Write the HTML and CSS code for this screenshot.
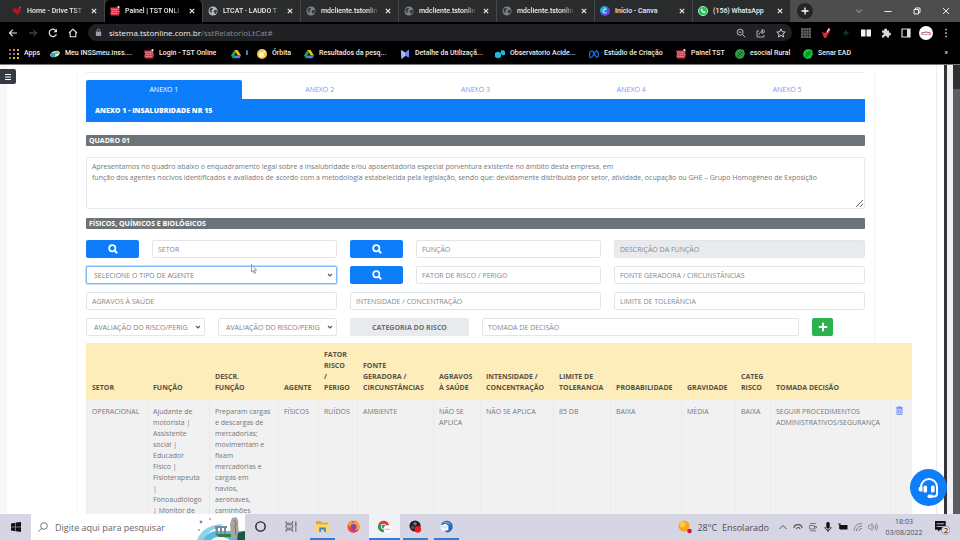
FILE: index.html
```
<!DOCTYPE html>
<html lang="pt-BR">
<head>
<meta charset="UTF-8">
<meta name="viewport" content="width=device-width, initial-scale=1.0">
<title>Painel | TST ONLINE</title>
<link rel="stylesheet" href="styles.css">
</head>
<body>

  <!-- shared icons -->
  <svg class="sprite" aria-hidden="true">
    <symbol id="globe" viewBox="0 0 10 10"><circle cx="5" cy="5" r="4.5" fill="#b9bbbe"/><path d="M1.5 3l2-1.3 1.6.8-.8 1.4-1.3.5.9 1.2-.5 1.6L1.7 5.6zM6 4.4l2.2-.9.9 1.7-1.2 2.2-1.3.6-.3-1.7-1-.7z" fill="#3b3d40"/></symbol>
    <symbol id="tst" viewBox="0 0 10 10"><path d="M0 1.5h6L8 0v1.5h2L9 4l1 1-1 4.5H1.2L0 7l1-2z" fill="#d9324a"/><path d="M1 3.4h8M1.5 5.4h7M1.5 7.4h6.5" stroke="#f3bcc4" stroke-width=".7" stroke-dasharray="1.6 .5"/><circle cx="8.6" cy="1" r=".9" fill="#fff"/></symbol>
    <symbol id="drive" viewBox="0 0 10 10"><path d="M3.4 1h3.2L10 6.6H6.8z" fill="#fbbc04"/><path d="M3.4 1L5 3.8 1.7 9.2 0 6.6z" fill="#1fa463"/><path d="M3.4 6.6H10L8.4 9.2H1.8z" fill="#4285f4"/></symbol>
    <symbol id="leaf" viewBox="0 0 10 10"><path d="M5 0l4 1 .8 4L8 9 4 10 .6 8 0 4 2 1z" fill="currentColor"/><path d="M1 9l7-7M3 3l4 4M2 5l3 3M5 2l3 3" stroke="#0b4d18" stroke-width=".7"/></symbol>
    <symbol id="close" viewBox="0 0 8 8"><path d="M1.8 1.8l4.4 4.4M6.2 1.8L1.8 6.2" stroke="#e8e8e8" stroke-width="1.2"/></symbol>
    <symbol id="search" viewBox="0 0 10 10"><circle cx="4.3" cy="4.3" r="3.1" fill="none" stroke="#fff" stroke-width="1.7"/><path d="M6.6 6.6l2.6 2.6" stroke="#fff" stroke-width="2"/></symbol>
    <symbol id="chevron" viewBox="0 0 6 6"><path d="M1 2l2 2 2-2" fill="none" stroke="#55595e" stroke-width="1.1"/></symbol>
  </svg>

  <header class="browser">
    <div class="tabs">
      <div class="tab">
        <svg class="icon" viewBox="0 0 10 10"><path d="M5 9L.6 4.6C0 2 3 1 5 3c2-2 4.600-.6 4.200 1.800z" fill="#b5121f"/><circle cx="7.800" cy="1.500" r="1" fill="#e33"/></svg>
        <span class="tab-title">Home - Drive TST</span>
        <button class="tab-close" aria-label="Fechar"><svg><use href="#close"/></svg></button>
      </div>
      <div class="tab active">
        <svg class="icon"><use href="#tst"/></svg>
        <span class="tab-title">Painel | TST ONLI</span>
        <button class="tab-close" aria-label="Fechar"><svg><use href="#close"/></svg></button>
      </div>
      <div class="tab">
        <svg class="icon"><use href="#globe"/></svg>
        <span class="tab-title">LTCAT - LAUDO T</span>
        <button class="tab-close" aria-label="Fechar"><svg><use href="#close"/></svg></button>
      </div>
      <div class="tab">
        <svg class="icon dim"><use href="#globe"/></svg>
        <span class="tab-title">mdcliente.tstonlin</span>
        <button class="tab-close" aria-label="Fechar"><svg><use href="#close"/></svg></button>
      </div>
      <div class="tab">
        <svg class="icon dim"><use href="#globe"/></svg>
        <span class="tab-title">mdcliente.tstonlin</span>
        <button class="tab-close" aria-label="Fechar"><svg><use href="#close"/></svg></button>
      </div>
      <div class="tab">
        <svg class="icon dim"><use href="#globe"/></svg>
        <span class="tab-title">mdcliente.tstonlin</span>
        <button class="tab-close" aria-label="Fechar"><svg><use href="#close"/></svg></button>
      </div>
      <div class="tab">
        <svg class="icon" viewBox="0 0 10 10"><circle cx="5" cy="5" r="5" fill="#5a4be0"/><path d="M0 5a5 5 0 0 1 5-5l2 2-4 6z" fill="#19b9d0"/><path d="M6.800 3.600C6 2.200 3.500 3 3.400 5.500c0 2 2.400 2 3.300.6" fill="none" stroke="#fff"/></svg>
        <span class="tab-title">Início - Canva</span>
        <button class="tab-close" aria-label="Fechar"><svg><use href="#close"/></svg></button>
      </div>
      <div class="tab">
        <svg class="icon" viewBox="0 0 10 10"><circle cx="5" cy="5" r="4.600" fill="#25c254" stroke="#d9f7e0" stroke-width=".8"/><path d="M3 3c-.4 2 2 4.500 4 4l.3-1.300-1.200-.6-.6.500L4.200 4.400l.4-.6L4 2.700z" fill="#fff"/></svg>
        <span class="tab-title">(156) WhatsApp</span>
        <button class="tab-close" aria-label="Fechar"><svg><use href="#close"/></svg></button>
      </div>
      <div class="window-bar">
        <button class="new-tab" aria-label="Nova guia"><svg viewBox="0 0 10 10"><path d="M5 1.500v7M1.500 5h7" stroke="#fff" stroke-width="1.300"/></svg></button>
        <div class="window-buttons">
          <button aria-label="Pesquisar guias"><svg viewBox="0 0 10 10"><path d="M2 3.500l3 3 3-3" fill="none" stroke="#ccc" stroke-width=".8"/></svg></button>
          <button aria-label="Minimizar"><svg viewBox="0 0 10 10"><path d="M1.500 5.500h7" stroke="#eee"/></svg></button>
          <button aria-label="Restaurar"><svg viewBox="0 0 10 10"><path d="M2 3.500h4.500V8H2zM3.500 3.500V2H8v4.500H6.500" fill="none" stroke="#eee"/></svg></button>
          <button aria-label="Fechar janela"><svg viewBox="0 0 10 10"><path d="M2 2l6 6M8 2L2 8" stroke="#eee"/></svg></button>
        </div>
      </div>
    </div>

    <div class="toolbar">
      <nav class="nav-buttons">
        <button aria-label="Voltar"><svg viewBox="0 0 10 10"><path d="M9 5H1.500M4.800 1.700L1.500 5l3.300 3.300" fill="none" stroke="#e8e8e8" stroke-width="1.100"/></svg></button>
        <button aria-label="Avançar"><svg viewBox="0 0 10 10"><path d="M1 5h7.500M5.200 1.700L8.500 5 5.200 8.300" fill="none" stroke="#606060"/></svg></button>
        <button aria-label="Recarregar"><svg viewBox="0 0 10 10"><path d="M8.400 6.200A3.700 3.700 0 1 1 7.800 2.500" fill="none" stroke="#e8e8e8" stroke-width="1.200"/><path d="M9 .8v3.400H5.600z" fill="#e8e8e8"/></svg></button>
        <button aria-label="Página inicial"><svg viewBox="0 0 10 10"><path d="M1 5l4-3.800L9 5M2.200 4.500v4.300h5.600V4.500" fill="none" stroke="#e8e8e8" stroke-width="1.100"/></svg></button>
      </nav>
      <div class="address">
        <svg class="lock" viewBox="0 0 8 10"><path d="M1 4h6v5H1z" fill="#9aa0a6"/><path d="M2.400 4V2.800a1.600 1.600 0 0 1 3.200 0V4" fill="none" stroke="#9aa0a6"/></svg>
        <span class="url"><b>sistema.tstonline.com.br</b>/sstRelatorioLtCat#</span>
        <div class="address-icons">
          <svg viewBox="0 0 10 10"><circle cx="4.200" cy="4.200" r="3" fill="none" stroke="#bbb"/><path d="M2.800 4.200h2.800M6.500 6.500L9.300 9.300" stroke="#bbb"/></svg>
          <svg viewBox="0 0 10 10"><path d="M3 3H1v6h7V7M3 7c.2-2.500 1.800-3.500 4-3.500M6 1.300l3 2.200L6 5.700z" fill="none" stroke="#bbb" stroke-width=".9"/></svg>
          <svg viewBox="0 0 10 10"><path d="M5 .9l1.200 2.800 3 .3-2.300 2 .7 3L5 7.400 2.400 9l.7-3L.8 4l3-.3z" fill="none" stroke="#ddd" stroke-width=".9"/></svg>
        </div>
      </div>
      <div class="extensions">
        <svg viewBox="0 0 10 10"><path d="M0 0h10v10H0z" fill="#626262"/><path d="M0 2.500h10M0 5h10M0 7.500h10M2.500 0v10M5 0v10M7.500 0v10" stroke="#252525" stroke-width=".6"/></svg>
        <svg viewBox="0 0 10 10"><path d="M1 4l3 1 4-5 1.500 2L5 10H3z" fill="#d7283b"/><path d="M6 3l2-3 1 1-3 4z" fill="#eee"/></svg>
        <svg viewBox="0 0 10 10"><path d="M5 2.500v5M2.500 5h5" stroke="#06352d" stroke-width="2"/></svg>
        <svg viewBox="0 0 10 10"><path d="M0 1.500h4.500v7H0zM5.500 1.500H10v7H5.500z" fill="#f4f4f4"/></svg>
        <svg viewBox="0 0 10 10"><path d="M1 2.500h2.300a1.400 1.400 0 1 1 2.600 0H8v2.200a1.400 1.400 0 1 1 0 2.600V9.500H5.800a1.300 1.300 0 1 0-2.500 0H1V7.200a1.300 1.300 0 1 0 0-2.500z" fill="#d8d8d8"/></svg>
        <svg viewBox="0 0 10 10"><path d="M1 1h8v8H1z" fill="none" stroke="#ddd" stroke-width="1.200"/><path d="M6 1h3v8H6z" fill="#ddd"/></svg>
        <svg class="avatar" viewBox="0 0 14 14"><circle cx="7" cy="7" r="7" fill="#fff"/><path d="M2 7.200q5-2.500 10 0" fill="none" stroke="#c7425a"/><path d="M2 8.500h10" stroke="#777" stroke-width=".6"/></svg>
        <svg viewBox="0 0 10 10"><path d="M4.300.8h1.500v1.500H4.300zM4.300 4.300h1.500v1.500H4.300zM4.300 7.800h1.500v1.500H4.300z" fill="#ddd"/></svg>
      </div>
    </div>

    <nav class="bookmarks">
      <a href="#"><svg class="icon" viewBox="0 0 10 10"><path d="M0 0h2v2H0zM0 4h2v2H0z" fill="#ea4335"/><path d="M4 0h2v2H4zM8 0h2v2H8z" fill="#f28b5b"/><path d="M4 4h2v2H4z" fill="#4285f4"/><path d="M8 4h2v2H8zM4 8h2v2H4zM8 8h2v2H8z" fill="#fbbc04"/><path d="M0 8h2v2H0z" fill="#34a853"/></svg>Apps</a>
      <a href="#"><svg class="icon" viewBox="0 0 10 10"><ellipse cx="5" cy="5" rx="5" ry="3" transform="rotate(-20 5 5)" fill="#d8ece6"/><circle cx="3" cy="6" r="2.200" fill="#25a2c9"/><path d="M4 3l4-1 1 2-4 2z" fill="#7fc36b"/></svg>Meu INSSmeu.inss....</a>
      <a href="#"><svg class="icon"><use href="#tst"/></svg>Login - TST Online</a>
      <a href="#"><svg class="icon"><use href="#drive"/></svg>i</a>
      <a href="#"><svg class="icon" viewBox="0 0 10 10"><circle cx="5" cy="5" r="5" fill="#f7c948"/><circle cx="4.500" cy="5.500" r="2.600" fill="#fff3c9"/><circle cx="7.500" cy="2.500" r="1" fill="#fff"/></svg>Órbita</a>
      <a href="#"><svg class="icon"><use href="#drive"/></svg>Resultados da pesq...</a>
      <a href="#"><svg class="icon" viewBox="0 0 10 10"><path d="M1 1l4 2.500L9 .5v8L5.500 7 1.500 10z" fill="#6c8be8"/><path d="M1 1l4 2.500v3L1.500 10z" fill="#a9bcf5"/></svg>Detalhe da Utilizaçã...</a>
      <a href="#"><svg class="icon" viewBox="0 0 10 10"><path d="M0 4l3-1.500 3 1.500v4L3 9.500 0 8zM6 1.500L8 1l2 1.500v3L8 6.500 6 5z" fill="#22b8d6"/></svg>Observatorio Acide...</a>
      <a href="#"><svg class="icon" viewBox="0 0 10 10"><path d="M1 8.300C-.3 5 1.300 1.700 3 1.900 5 2.200 6 8.300 8 8.300c2.400 0 1.500-6.300-.5-6.300C5.500 2 4 8.300 2 8.600z" fill="none" stroke="#1771e6" stroke-width="1.300"/></svg>Estúdio de Criação</a>
      <a href="#"><svg class="icon"><use href="#tst"/></svg>Painel TST</a>
      <a href="#"><svg class="icon green"><use href="#leaf"/></svg>esocial Rural</a>
      <a href="#"><svg class="icon bright"><use href="#leaf"/></svg>Senar EAD</a>
      <a href="#" class="more">»</a>
    </nav>
  </header>

  <div class="page">
    <aside class="sidebar">
      <button class="menu-toggle" aria-label="Menu"><svg viewBox="0 0 8 8"><path d="M1 1.500h6M1 4h6M1 6.500h6" stroke="#fff" stroke-width="1.100"/></svg></button>
    </aside>

    <main class="content">
      <section class="card">
        <hr>
        <nav class="annexes">
          <a href="#" class="active">ANEXO 1</a>
          <a href="#">ANEXO 2</a>
          <a href="#">ANEXO 3</a>
          <a href="#">ANEXO 4</a>
          <a href="#">ANEXO 5</a>
        </nav>
        <h1>ANEXO 1 - INSALUBRIDADE NR 15</h1>

        <form>
          <h2>QUADRO 01</h2>
          <textarea class="intro" aria-label="Quadro 01">Apresentamos no quadro abaixo o enquadramento legal sobre a insalubridade e/ou aposentadoria especial porventura existente no âmbito desta empresa, em
função dos agentes nocivos identificados e avaliados de acordo com a metodologia estabelecida pela legislação, sendo que: devidamente distribuída por setor, atividade, ocupação ou GHE – Grupo Homogêneo de Exposição</textarea>

          <h2>FÍSICOS, QUÍMICOS E BIOLÓGICOS</h2>
          <div class="fields">
            <button type="button" class="btn-search" aria-label="Buscar setor"><svg><use href="#search"/></svg></button>
            <input class="w3" type="text" placeholder="SETOR" aria-label="Setor">
            <button type="button" class="btn-search" aria-label="Buscar função"><svg><use href="#search"/></svg></button>
            <input class="w3" type="text" placeholder="FUNÇÃO" aria-label="Função">
            <input class="w4" type="text" placeholder="DESCRIÇÃO DA FUNÇÃO" aria-label="Descrição da função" disabled>

            <div class="select w4 focused">
              <select aria-label="Tipo de agente"><option>SELECIONE O TIPO DE AGENTE</option></select>
              <svg><use href="#chevron"/></svg>
            </div>
            <button type="button" class="btn-search" aria-label="Buscar fator de risco"><svg><use href="#search"/></svg></button>
            <input class="w3" type="text" placeholder="FATOR DE RISCO / PERIGO" aria-label="Fator de risco">
            <input class="w4" type="text" placeholder="FONTE GERADORA / CIRCUNSTÂNCIAS" aria-label="Fonte geradora">

            <input class="w4" type="text" placeholder="AGRAVOS À SAÚDE" aria-label="Agravos à saúde">
            <input class="w4" type="text" placeholder="INTENSIDADE / CONCENTRAÇÃO" aria-label="Intensidade">
            <input class="w4" type="text" placeholder="LIMITE DE TOLERÂNCIA" aria-label="Limite de tolerância">

            <div class="select w2">
              <select aria-label="Probabilidade"><option>AVALIAÇÃO DO RISCO/PERIGO</option></select>
              <svg><use href="#chevron"/></svg>
            </div>
            <div class="select w2">
              <select aria-label="Gravidade"><option>AVALIAÇÃO DO RISCO/PERIGO</option></select>
              <svg><use href="#chevron"/></svg>
            </div>
            <button type="button" class="category w2">CATEGORIA DO RISCO</button>
            <input class="w5" type="text" placeholder="TOMADA DE DECISÃO" aria-label="Tomada de decisão">
            <button type="button" class="btn-add" aria-label="Adicionar"><svg viewBox="0 0 10 10"><path d="M5 .8v8.400M.8 5h8.400" stroke="#fff" stroke-width="2"/></svg></button>
          </div>
        </form>

        <table>
          <colgroup>
            <col class="c-setor"><col class="c-funcao"><col class="c-descr"><col class="c-agente"><col class="c-fator"><col class="c-fonte"><col class="c-agravos"><col class="c-intens"><col class="c-limite"><col class="c-prob"><col class="c-grav"><col class="c-categ"><col class="c-tomada"><col>
          </colgroup>
          <thead>
            <tr>
              <th>SETOR</th>
              <th>FUNÇÃO</th>
              <th>DESCR.<br>FUNÇÃO</th>
              <th>AGENTE</th>
              <th>FATOR RISCO<br>/<br>PERIGO</th>
              <th>FONTE<br>GERADORA /<br>CIRCUNSTÂNCIAS</th>
              <th>AGRAVOS<br>À SAÚDE</th>
              <th>INTENSIDADE / CONCENTRAÇÃO</th>
              <th>LIMITE DE TOLERANCIA</th>
              <th>PROBABILIDADE</th>
              <th>GRAVIDADE</th>
              <th>CATEG RISCO</th>
              <th>TOMADA DECISÃO</th>
              <th></th>
            </tr>
          </thead>
          <tbody>
            <tr>
              <td>OPERACIONAL</td>
              <td>Ajudante de<br>motorista |<br>Assistente<br>social |<br>Educador<br>Físico |<br>Fisioterapeuta<br>|<br>Fonoaudiólogo<br>| Monitor de<br>transporte</td>
              <td>Preparam cargas<br>e descargas de<br>mercadorias;<br>movimentam e<br>fixam<br>mercadorias e<br>cargas em<br>navios,<br>aeronaves,<br>caminhões<br>e vagões</td>
              <td>FÍSICOS</td>
              <td>RUÍDOS</td>
              <td>AMBIENTE</td>
              <td>NÃO SE APLICA</td>
              <td>NÃO SE APLICA</td>
              <td>85 DB</td>
              <td>BAIXA</td>
              <td>MÉDIA</td>
              <td>BAIXA</td>
              <td>SEGUIR PROCEDIMENTOS ADMINISTRATIVOS/SEGURANÇA</td>
              <td><a href="#" aria-label="Excluir"><svg class="trash" viewBox="0 0 6 8"><path d="M.8 2h4.400v5.400H.8zM0 1.500h6M2 .6h2M2.300 3v3.500M3.700 3v3.500" fill="none" stroke="#5b80f0" stroke-width=".8"/></svg></a></td>
            </tr>
          </tbody>
        </table>
      </section>
    </main>

    <div class="page-edge"></div>
    <div class="inner-scroll"></div>
    <div class="outer-scroll"></div>

    <button class="support" aria-label="Suporte"><svg viewBox="0 0 22 22"><path d="M3 12V10a8 8 0 0 1 16 0v6.500a3 3 0 0 1-3 3h-4" fill="none" stroke="#fff" stroke-width="2"/><path d="M3 9.500h1.500v5H3a2.500 2.500 0 0 1 0-5z" fill="#fff"/><rect x="5.500" y="8.500" width="3.600" height="7" rx="1.500" fill="#fff"/><rect x="13" y="8.500" width="3.600" height="7" rx="1.500" fill="#fff"/><rect x="9.500" y="17.600" width="5.500" height="3.400" rx="1.700" fill="#fff"/></svg></button>
    <svg class="cursor" viewBox="0 0 6 10"><path d="M.5.5v7.500l1.700-1.500 1.200 3 1.100-.5-1.200-2.800h2.200z" fill="#fff" stroke="#555" stroke-width=".6"/></svg>
  </div>

  <footer class="taskbar">
    <button class="start" aria-label="Iniciar"><svg viewBox="0 0 10 10"><path d="M0 1.400l4.500-.7v4H0zM5 .6l5-.6v4.700H5zM0 5.200h4.500v4L0 8.600zM5 5.200h5V10l-5-.7z" fill="#111"/></svg></button>
    <label class="search">
      <svg class="glass" viewBox="0 0 10 10"><circle cx="6" cy="4" r="3.300" fill="none" stroke="#555" stroke-width=".8"/><path d="M3.700 6.400L.6 9.500" stroke="#555" stroke-width=".9"/></svg>
      <input type="text" placeholder="Digite aqui para pesquisar">
      <svg class="doodle" viewBox="0 0 48 26"><path d="M0 26c4-10 12-15 26-16l-6 5c-6 0-10 5-12 11z" fill="#8fd3ea"/><path d="M6 26c4-7 9-9 15-9h27v9z" fill="#57bcd8"/><path d="M14 26c4-4 10-4 15-2l4 2z" fill="#eef9fb"/><path d="M18 20h30v3H22z" fill="#397a49"/><path d="M18 12h12v2h-1v6h-2v-6h-2v6h-2v-6h-2v6h-2z" fill="#6f8d9c"/><path d="M34 24l-1-14 2-6 4-1 2 3 1 18z" fill="#aaa69d"/><path d="M37 6l2 2-1 5 1 8" fill="none" stroke="#77736c"/><path d="M41 19l7-2v9h-8z" fill="#17584b"/><circle cx="4" cy="8" r="1.400" fill="#c75fd0"/><circle cx="13" cy="5" r="1" fill="#f18c64"/><circle cx="2" cy="16" r="1" fill="#77c96b"/></svg>
    </label>
    <div class="apps">
      <button aria-label="Cortana"><svg viewBox="0 0 12 12"><circle cx="6" cy="6" r="4.300" fill="none" stroke="#222" stroke-width="1.300"/></svg></button>
      <button aria-label="Visão de tarefas"><svg viewBox="0 0 12 12"><path d="M1 1v2h6V1M1 11V9h6v2M1 4.500h6v3H1zM10 1v10M9 4h2" fill="none" stroke="#555" stroke-width=".8"/></svg></button>
      <button class="open" aria-label="Explorador"><svg viewBox="0 0 12 12"><path d="M0 1h4l1 1.300h6V11H0z" fill="#e9a928"/><path d="M0 4h12v7H0z" fill="#fbd768"/><path d="M3 7h6v4H7.500V8.800h-3V11H3z" fill="#3487c9"/></svg></button>
      <button aria-label="Firefox"><svg viewBox="0 0 12 12"><circle cx="6" cy="6.300" r="5.600" fill="#f0532d"/><path d="M1 3l2-2 3 2 2-3c4 3 5 8 1 10-4-1-7-3-8-7z" fill="#ff9f24"/><circle cx="6" cy="6.500" r="2.800" fill="#7946c8"/><path d="M1 8c2 4 8 4 10 0-3 2-7 2-10 0z" fill="#ef2d66"/></svg></button>
      <button class="open current" aria-label="Chrome"><svg viewBox="0 0 14 14"><circle cx="6" cy="7" r="6" fill="#fbc116"/><path d="M6 7L.8 4A6 6 0 0 1 11.800 5z" fill="#e33b2e"/><path d="M6 7l1 6A6 6 0 0 1 .8 4z" fill="#259b4b"/><circle cx="6" cy="7" r="2.900" fill="#fff"/><circle cx="6" cy="7" r="2.100" fill="#3b7ded"/><circle cx="10" cy="10" r="4" fill="#fff"/><path d="M7 10h6" stroke="#cf7e7e" stroke-width=".8"/></svg></button>
      <button class="open" aria-label="OBS"><svg viewBox="0 0 14 14"><circle cx="6.500" cy="6.500" r="6" fill="#242124"/><circle cx="6.500" cy="4" r="1.800" fill="#777"/><circle cx="4" cy="8" r="1.800" fill="#555"/><circle cx="9.500" cy="10" r="3.600" fill="#ed1c24"/></svg></button>
      <button class="open" aria-label="Thunderbird"><svg viewBox="0 0 14 14"><path d="M1 5c2-5 9-6 12-1 2 5-1 9-5 9.500L3 11z" fill="#2767b4"/><path d="M3 3c3-2 7-1 9 2l-3-1z" fill="#67a8e6"/><path d="M0 6l6-2 3 2v5l-7 1z" fill="#f5f6f8"/><path d="M.5 6.500L5 8l4-2" fill="none" stroke="#a9b6c5" stroke-width=".6"/></svg></button>
    </div>
    <div class="tray">
      <div class="weather">
        <svg viewBox="0 0 14 14"><circle cx="6" cy="6" r="5.500" fill="#f7a51c"/><circle cx="4.500" cy="4.500" r="3" fill="#ffc744"/><circle cx="11.500" cy="11" r="2.300" fill="#c9183c"/></svg>
        <span>28°C&nbsp; Ensolarado</span>
      </div>
      <div class="tray-icons">
        <svg viewBox="0 0 10 10"><path d="M1.500 7L5 3.500 8.500 7" fill="none" stroke="#444" stroke-width=".9"/></svg>
        <svg viewBox="0 0 10 10"><path d="M1 6c0-4.500 8-4.500 8 0M3.500 7c0-2 3.500-2 3.500 0" fill="none" stroke="#555" stroke-width="1.200"/></svg>
        <svg viewBox="0 0 10 10"><path d="M2 1.500h6M1.500 3.500h5v3.500h-5zM6.500 4.500h2v1.500h-2M2 8.800h6" fill="none" stroke="#666" stroke-width=".8"/></svg>
        <svg viewBox="0 0 10 10"><rect x="3.300" y="0" width="3.400" height="6.500" rx="1.500" fill="#111"/><path d="M2 5c0 4 6 4 6 0M5 8v2" fill="none" stroke="#111" stroke-width=".9"/></svg>
        <svg viewBox="0 0 10 10"><path d="M2 3h7.500v4.500H2z" fill="#111"/><path d="M0 2h3M1.500 2v5" stroke="#333"/></svg>
        <svg viewBox="0 0 10 10"><path d="M1 9C1 4 4 1.500 9 1.500M3.500 9c0-3 2-5 5.500-5M6 9c0-1.600 1-2.500 3-2.500" fill="none" stroke="#777" stroke-width=".9"/></svg>
        <svg viewBox="0 0 10 10"><path d="M.5 3.500H2l2-2v7l-2-2H.5zM5.500 3.500q1 1.500 0 3M7 2.500q2 2.500 0 5M8.500 1.500q2.500 3.500 0 7" fill="none" stroke="#777" stroke-width=".7"/></svg>
      </div>
      <div class="clock"><span>18:03</span><span>03/08/2022</span></div>
      <button class="notifications" aria-label="Notificações"><svg viewBox="0 0 14 14"><path d="M0 1h10v8H5L3 11V9H0z" fill="#111"/><path d="M1.500 3.500h7M1.500 6h7" stroke="#d5d4e3" stroke-width=".8"/><circle cx="10" cy="9.500" r="3.900" fill="#dcdbe8" stroke="#777" stroke-width=".6"/></svg><span>2</span></button>
    </div>
  </footer>

</body>
</html>
```
FILE: styles.css
```
* {
  box-sizing: border-box;
}

body {
  font-family: 'Open Sans', 'Noto Sans', sans-serif;
  font-size: 7px;
  line-height: 11px;
  margin: 0;
  height: 100vh;
  display: flex;
  flex-direction: column;
  overflow: hidden;
  background-color: #fff;
  color: #74777b;
}

button,
input,
select,
textarea {
  font: inherit;
  margin: 0;
}

button {
  display: flex;
  justify-content: center;
  align-items: center;
  padding: 0;
  border: none;
  background: none;
  cursor: pointer;
}

a {
  text-decoration: none;
}

.sprite {
  position: absolute;
  width: 0;
  height: 0;
}

.icon {
  width: 10px;
  height: 10px;
  flex: none;
}

/* browser */
.browser {
  background-color: #000;
  color: #ededed;
  font-family: Roboto, sans-serif;
  font-weight: 500;
}

.tabs {
  display: flex;
  height: 22px;
  padding-left: 7px;
  background-color: #2a2b2c;
}

.tab {
  display: flex;
  align-items: center;
  gap: 5px;
  width: 98px;
  padding: 0 6px 0 5px;
  border-right: 1px solid #454647;
}

.tab.active {
  background-color: #000;
  border-radius: 5px 5px 0 0;
}

.tab-title {
  flex: 1;
  white-space: nowrap;
  -webkit-mask-image: linear-gradient(to right, #000 80%, transparent);
  mask-image: linear-gradient(to right, #000 80%, transparent);
}

.tab:nth-child(7) .tab-title,
.tab:nth-child(8) .tab-title {
  -webkit-mask-image: none;
  mask-image: none;
}

.tab-close svg {
  width: 8px;
  height: 8px;
}

.dim {
  opacity: 0.6;
}

.window-bar {
  flex: 1;
  display: flex;
  justify-content: space-between;
  align-items: center;
  padding: 0 9px 0 6px;
  background-color: #4d4d4d;
}

.new-tab {
  width: 16px;
  height: 16px;
  border-radius: 50%;
  background-color: #252525;
}

.new-tab svg,
.window-buttons svg {
  width: 10px;
  height: 10px;
}

.window-buttons {
  display: flex;
  gap: 19px;
}

.toolbar {
  display: flex;
  align-items: center;
  height: 21px;
  padding: 0 9px 0 8px;
}

.nav-buttons {
  display: flex;
  gap: 10px;
  width: 80px;
}

.nav-buttons svg,
.address-icons svg,
.extensions svg {
  width: 10px;
  height: 10px;
}

.address {
  flex: 1;
  display: flex;
  align-items: center;
  height: 17px;
  padding: 0 6px 0 7px;
  border-radius: 9px;
  background-color: #202124;
}

.lock {
  width: 7px;
  height: 9px;
}

.url {
  flex: 1;
  padding-left: 7px;
  font-family: 'Open Sans', sans-serif;
  font-size: 8px;
  font-weight: 400;
  color: #8a8d91;
}

.url b {
  color: #f0f0f0;
  font-weight: 500;
}

.address-icons {
  display: flex;
  gap: 10px;
}

.extensions {
  display: flex;
  align-items: center;
  gap: 10px;
  padding-left: 9px;
}

.extensions .avatar {
  width: 14px;
  height: 14px;
  margin: 0 -2px;
}

.bookmarks {
  display: grid;
  grid-template-columns: 41px 94px 87px 26px 47px 96px 95px 94px 87px 59px 68px 1fr auto;
  align-items: center;
  height: 21px;
  padding: 0 12px 0 9px;
}

.bookmarks a {
  display: flex;
  align-items: center;
  gap: 5px;
  color: #ededed;
  white-space: nowrap;
}

.bookmarks .green {
  color: #2f9e44;
}

.bookmarks .bright {
  color: #17c53f;
}

/* page */
.page {
  position: relative;
  flex: 1;
  display: flex;
  min-height: 0;
  overflow: hidden;
  border-top: 1px solid #777;
}

.sidebar {
  width: 7px;
  padding-top: 4px;
  background-color: #f8f8f9;
}

.menu-toggle {
  width: 16px;
  height: 15px;
  border-radius: 0 2px 2px 0;
  background-color: #343a40;
}

.menu-toggle svg {
  width: 8px;
  height: 8px;
}

.content {
  flex: 1;
  min-width: 0;
  padding: 0 61px 0 69px;
}

.card {
  padding: 0 9px;
  border: solid #f5f5f6;
  border-width: 0 1px;
}

hr {
  margin: 7px 0;
  border: none;
  border-top: 1px solid #ededee;
}

.annexes {
  display: flex;
}

.annexes a {
  flex: 1;
  padding: 4px 0;
  border-radius: 2px 2px 0 0;
  text-align: center;
  color: #8295f2;
}

.annexes .active {
  background-color: #0d7df9;
  color: #fff;
}

h1 {
  margin: 0 0 13px;
  padding: 6px 9px;
  font-size: 7px;
  font-weight: 800;
  background-color: #0d7df9;
  color: #fff;
}

h2 {
  margin: 0 0 11px;
  padding: 0 3px;
  border-radius: 1px;
  font-size: 7px;
  font-weight: 700;
  background-color: #6c7379;
  color: #fff;
}

.intro {
  display: block;
  width: 100%;
  height: 52px;
  margin-bottom: 9px;
  padding: 3px 5px;
  border: 1px solid #e6e8eb;
  border-radius: 2px;
  color: #74777b;
}

.fields {
  display: grid;
  grid-template-columns: repeat(12, 1fr);
  gap: 8px 13px;
  margin-bottom: 7px;
}

.fields > * {
  height: 18px;
  min-width: 0;
}

.w2 {
  grid-column: span 2;
}

.w3 {
  grid-column: span 3;
}

.w4 {
  grid-column: span 4;
}

.w5 {
  grid-column: span 5;
}

.fields input,
.fields select {
  width: 100%;
  padding: 0 5px;
  border: 1px solid #e3e5e8;
  border-radius: 2px;
  background-color: #fff;
  color: #7d8185;
}

.fields input::placeholder {
  color: #85898e;
}

.fields input:disabled {
  background-color: #e9eaed;
}

.select {
  position: relative;
}

.fields select {
  display: block;
  height: 100%;
  padding: 0 16px 0 7px;
  appearance: none;
}

.select svg {
  position: absolute;
  top: 6px;
  right: 4px;
  width: 6px;
  height: 6px;
}

.fields .focused select {
  border-color: #80b8f8;
  box-shadow: 0 0 0 1px #c5dffc;
}

.btn-search {
  border-radius: 2px;
  background-color: #0d7df9;
}

.btn-search svg,
.btn-add svg {
  width: 10px;
  height: 10px;
}

.category {
  border-radius: 2px;
  background-color: #e9eaed;
  font-weight: 700;
  color: #6c7175;
}

.btn-add {
  width: 21px;
  border-radius: 2px;
  background-color: #2bb24c;
}

/* results table, wider than the card */
table {
  width: 106%;
  table-layout: fixed;
  border-spacing: 0;
  background-color: #f1f1f1;
}

th,
td {
  padding: 6px 0 6px 6px;
  text-align: left;
}

th {
  vertical-align: bottom;
  background-color: #fcedba;
  font-weight: 700;
  color: #56524a;
}

td {
  padding-left: 5px;
  vertical-align: top;
  border: solid #ebebec;
  border-width: 1px 0 0 1px;
}

.c-setor { width: 61px; }
.c-funcao { width: 62px; }
.c-descr { width: 69px; }
.c-agente { width: 40px; }
.c-fator { width: 39px; }
.c-fonte { width: 76px; }
.c-agravos { width: 47px; }
.c-intens { width: 73px; }
.c-limite { width: 57px; }
.c-prob { width: 71px; }
.c-grav { width: 54px; }
.c-categ { width: 35px; }
.c-tomada { width: 120px; }

.trash {
  display: block;
  width: 7px;
  height: 9px;
}

/* right side */
.page-edge {
  width: 8px;
  border-left: 1px solid #ececed;
}

.inner-scroll {
  width: 9px;
  border-left: 3px solid #333436;
  background-color: #f1f1f3;
}

.outer-scroll {
  width: 7px;
  border-top: 24px solid #2f3032;
  background-color: #5d5d5f;
}

.support {
  position: absolute;
  right: 13px;
  bottom: 8px;
  width: 37px;
  height: 37px;
  border-radius: 50%;
  background-color: #0d7df9;
}

.support svg {
  width: 22px;
  height: 22px;
}

.cursor {
  position: absolute;
  top: 199px;
  left: 251px;
  width: 6px;
  height: 10px;
}

/* taskbar */
.taskbar {
  display: flex;
  height: 26px;
  background-color: #d6d5e4;
  color: #4c4c55;
}

.start {
  width: 31px;
}

.start svg {
  width: 10px;
  height: 10px;
}

.search {
  display: flex;
  align-items: center;
  width: 214px;
  padding-left: 7px;
  background-color: #fff;
}

.glass {
  width: 10px;
  height: 10px;
  flex: none;
}

.search input {
  flex: 1;
  min-width: 0;
  padding: 0 0 0 7px;
  border: none;
  font-size: 9px;
  background: none;
}

.search input::placeholder {
  color: #66666c;
}

.doodle {
  width: 48px;
  height: 26px;
}

.apps {
  display: flex;
}

.apps button {
  width: 31px;
  border-bottom: 2px solid transparent;
}

.apps svg {
  width: 13px;
  height: 13px;
}

.apps .open {
  width: 25px;
  margin: 0 3px;
  border-bottom-color: #2d7fd3;
}

.apps .current {
  width: 31px;
  margin: 0;
  background-color: #f0f0f6;
}

.tray {
  display: flex;
  align-items: center;
  margin-left: auto;
  padding-right: 10px;
}

.weather {
  display: flex;
  align-items: center;
  gap: 5px;
  font-size: 9px;
}

.weather svg {
  width: 14px;
  height: 14px;
}

.tray-icons {
  display: flex;
  gap: 5px;
  padding: 0 6px 0 9px;
}

.tray-icons svg {
  width: 10px;
  height: 10px;
}

.clock {
  display: flex;
  flex-direction: column;
  width: 40px;
  text-align: center;
}

.notifications {
  position: relative;
  margin-left: 11px;
}

.notifications svg {
  width: 15px;
  height: 15px;
}

.notifications span {
  position: absolute;
  right: 2px;
  bottom: -1px;
}
```
